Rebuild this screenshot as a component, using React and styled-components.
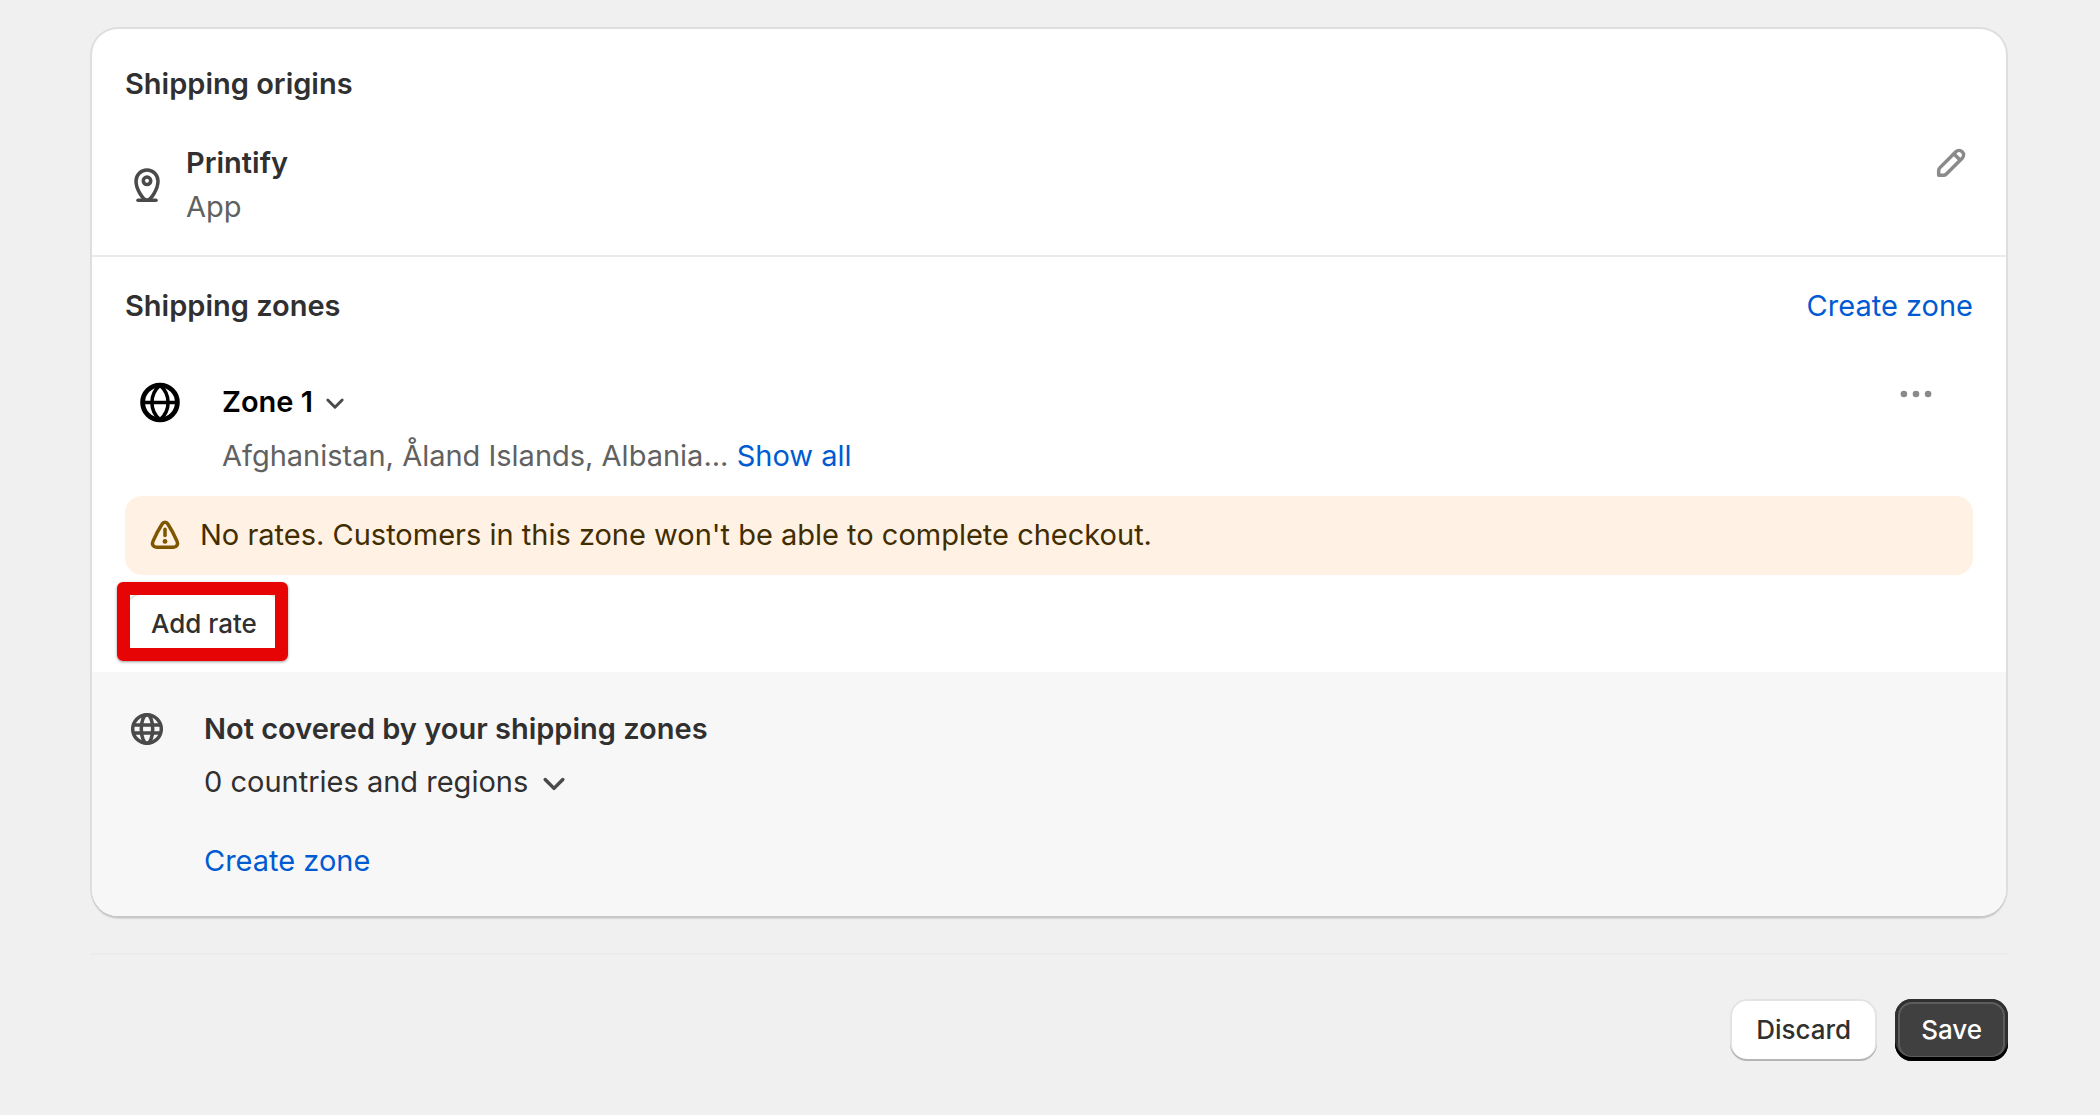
import styled, { createGlobalStyle } from 'styled-components';

const GlobalStyle = createGlobalStyle`
  *,
  *::before,
  *::after {
    box-sizing: border-box;
  }

  body {
    margin: 0;
    background: #f0f0f0;
    color: #303030;
    font-family: Inter, 'Liberation Sans', sans-serif;
    font-size: 29px;
    line-height: 44px;
  }
`;

const Page = styled.main`
  padding: 29px 92px 54px 90px;
`;

const Card = styled.div`
  margin: 0 2px;
  border-radius: 26px;
  overflow: hidden;
  background: #fff;
  box-shadow: 0 2px 0 0 #c8c8c8, 0 0 0 2px #dedede, 0 3px 1px 0 #d8d8d8;
`;

const Section = styled.section`
  padding: 27px 33px 17px;
`;

const OriginsSection = styled(Section)`
  padding: 33px 33px 26px;
  border-bottom: 2px solid #ebebeb;
`;

const UncoveredSection = styled(Section)`
  display: flex;
  gap: 35px;
  padding: 35px 33px 33px;
  background: #f7f7f7;
`;

const SectionHeader = styled.header`
  display: flex;
  justify-content: space-between;
  margin-bottom: ${(props) => props.$space};
`;

const Heading = styled.h2`
  margin: 0;
  font-size: inherit;
  font-weight: 600;
`;

const Title = styled.h3`
  margin: 0;
  font-size: inherit;
  font-weight: 600;
`;

const Text = styled.p`
  margin: 0;
`;

const SubduedText = styled(Text)`
  color: #616161;
`;

const Link = styled.a`
  color: #005bd3;
  text-decoration: none;
`;

const Origin = styled.div`
  display: flex;
  align-items: center;
  gap: 17px;
`;

const OriginInfo = styled.div`
  flex: 1;
`;

const IconButton = styled.button`
  align-self: flex-start;
  padding: 0;
  border: none;
  background: none;
  cursor: pointer;
`;

const ToggleButton = styled.button`
  display: flex;
  align-items: center;
  gap: 4px;
  padding: 0;
  border: none;
  background: none;
  color: ${(props) => (props.$strong ? '#000' : 'inherit')};
  font: inherit;
  font-weight: ${(props) => (props.$strong ? 600 : 400)};
  cursor: pointer;
`;

const Zone = styled.div`
  display: flex;
  gap: 40px;
  padding: 0 35px 18px 13px;
`;

const ZoneInfo = styled.div`
  display: flex;
  flex: 1;
  flex-direction: column;
  align-items: flex-start;
  gap: 10px;
  padding-top: 8px;
`;

const ZoneIcon = styled.div`
  padding-top: 8px;
`;

const Banner = styled.div`
  display: flex;
  align-items: center;
  gap: 13px;
  margin-bottom: 18px;
  padding: 17px 18px 18px;
  border-radius: 17px;
  background: #fff1e3;
  color: #412d00;
`;

const UncoveredInfo = styled.div`
  display: flex;
  flex-direction: column;
  align-items: flex-start;
  gap: 9px;
`;

const UncoveredLink = styled(Link)`
  margin-top: 26px;
`;

const Button = styled.button`
  padding: 9px 26px;
  border: none;
  border-radius: 17px;
  background: #fff;
  color: #303030;
  font: inherit;
  font-size: 26px;
  font-weight: 500;
  box-shadow: inset 0 -2px 0 #b5b5b5, inset 0 0 0 2px #e3e3e3;
  cursor: pointer;
`;

const PrimaryButton = styled(Button)`
  background: #404040;
  color: #fff;
  box-shadow: inset 0 -4px 0 #000, inset 0 0 0 3px #303030,
    inset 0 0 0 5px #5c5c5c;
`;

const Highlight = styled.div`
  position: relative;
  width: fit-content;

  &::after {
    content: '';
    position: absolute;
    inset: -11px -5px -6px -8px;
    border: 13px solid #e60404;
    border-radius: 6px;
    box-shadow: 0 1px 3px rgba(0, 0, 0, 0.4);
    pointer-events: none;
  }
`;

const Divider = styled.hr`
  margin: 37px 0 44px;
  border: none;
  border-top: 2px solid #ebebeb;
`;

const Actions = styled.div`
  display: flex;
  justify-content: flex-end;
  gap: 18px;
`;

const Icon = styled.svg`
  display: block;
  flex: none;
  width: ${(props) => props.$size || 44}px;
  height: ${(props) => props.$size || 44}px;
  fill: none;
  stroke: ${(props) => props.$color || '#4a4a4a'};
  stroke-width: 1.6;
  stroke-linecap: round;
  stroke-linejoin: round;
`;

function PinIcon() {
  return (
    <Icon viewBox='0 0 20 20'>
      <path d='M10 16.9C8.3 16.9 5 12 5 8.2a5 5 0 0 1 10 0c0 3.8-3.3 8.7-5 8.7Z' />
      <circle cx='10' cy='8.1' r='1.7' />
      <path d='M5.9 16.9h8.2' />
    </Icon>
  );
}

function PencilIcon() {
  return (
    <Icon viewBox='0 0 20 20' $color='#8a8a8a'>
      <path d='M4.4 15.6v-2.1c0-.5.2-1 .6-1.4l7.2-7.2a2 2 0 0 1 2.9 2.9L7.9 15c-.4.4-.9.6-1.4.6Z' />
      <path d='m11.4 5.9 2.7 2.7' />
    </Icon>
  );
}

function GlobeIcon() {
  return (
    <Icon viewBox='0 0 20 20' $color='#000'>
      <circle cx='10' cy='10.2' r='7.9' strokeWidth='2.2' />
      <path d='M10 2.3c-4.9 4.3-4.9 11.5 0 15.8M10 2.3c4.9 4.3 4.9 11.5 0 15.8M2.1 10.2h15.8' />
    </Icon>
  );
}

function GlobeGridIcon() {
  return (
    <Icon viewBox='0 0 20 20'>
      <circle cx='10' cy='10' r='6.5' />
      <ellipse cx='10' cy='10' rx='2.6' ry='6.5' />
      <path d='M4 8.2h12M4 11.8h12' />
    </Icon>
  );
}

function ChevronIcon({ size }) {
  return (
    <Icon viewBox='0 0 20 20' $size={size}>
      <path d='m6 8.9 4 4 4-4' />
    </Icon>
  );
}

function DotsIcon() {
  return (
    <Icon viewBox='0 0 20 20'>
      <g fill='#8a8a8a' stroke='none'>
        <circle cx='4.5' cy='10' r='1.5' />
        <circle cx='10' cy='10' r='1.5' />
        <circle cx='15.5' cy='10' r='1.5' />
      </g>
    </Icon>
  );
}

function WarningIcon() {
  return (
    <Icon viewBox='0 0 20 20' $color='#7f5600'>
      <path d='M8.7 5c.6-1 2-1 2.6 0 1.5 2.3 2.9 4.9 4.2 7.9.6 1.3-.2 2.7-1.6 2.7H6.1c-1.4 0-2.2-1.4-1.6-2.7C5.8 9.900 7.200 7.300 8.700 5Z' />
      <path d='M10 7.400v2.800' />
      <circle cx='10' cy='12.9' r='1.1' fill='#7f5600' stroke='none' />
    </Icon>
  );
}

function ShippingOrigins() {
  return (
    <OriginsSection>
      <SectionHeader $space='35px'>
        <Heading>Shipping origins</Heading>
      </SectionHeader>
      <Origin>
        <PinIcon />
        <OriginInfo>
          <Title>Printify</Title>
          <SubduedText>App</SubduedText>
        </OriginInfo>
        <IconButton aria-label='Edit shipping origins'>
          <PencilIcon />
        </IconButton>
      </Origin>
    </OriginsSection>
  );
}

function ShippingZones() {
  return (
    <Section>
      <SectionHeader $space='44px'>
        <Heading>Shipping zones</Heading>
        <Link href='#create-zone'>Create zone</Link>
      </SectionHeader>
      <Zone>
        <ZoneIcon>
          <GlobeIcon />
        </ZoneIcon>
        <ZoneInfo>
          <ToggleButton $strong>
            Zone 1
            <ChevronIcon size={36} />
          </ToggleButton>
          <SubduedText>
            Afghanistan, Åland Islands, Albania...{' '}
            <Link href='#show-all'>Show all</Link>
          </SubduedText>
        </ZoneInfo>
        <IconButton aria-label='Zone actions'>
          <DotsIcon />
        </IconButton>
      </Zone>
      <Banner role='status'>
        <WarningIcon />
        <Text>
          No rates. Customers in this zone won't be able to complete checkout.
        </Text>
      </Banner>
      <Highlight>
        <Button>Add rate</Button>
      </Highlight>
    </Section>
  );
}

function UncoveredZones() {
  return (
    <UncoveredSection>
      <GlobeGridIcon />
      <UncoveredInfo>
        <Title>Not covered by your shipping zones</Title>
        <ToggleButton>
          0 countries and regions
          <ChevronIcon size={44} />
        </ToggleButton>
        <UncoveredLink href='#create-zone'>Create zone</UncoveredLink>
      </UncoveredInfo>
    </UncoveredSection>
  );
}

function App() {
  return (
    <>
      <GlobalStyle />
      <Page>
        <Card>
          <ShippingOrigins />
          <ShippingZones />
          <UncoveredZones />
        </Card>
        <Divider />
        <Actions>
          <Button>Discard</Button>
          <PrimaryButton>Save</PrimaryButton>
        </Actions>
      </Page>
    </>
  );
}

export default App;
